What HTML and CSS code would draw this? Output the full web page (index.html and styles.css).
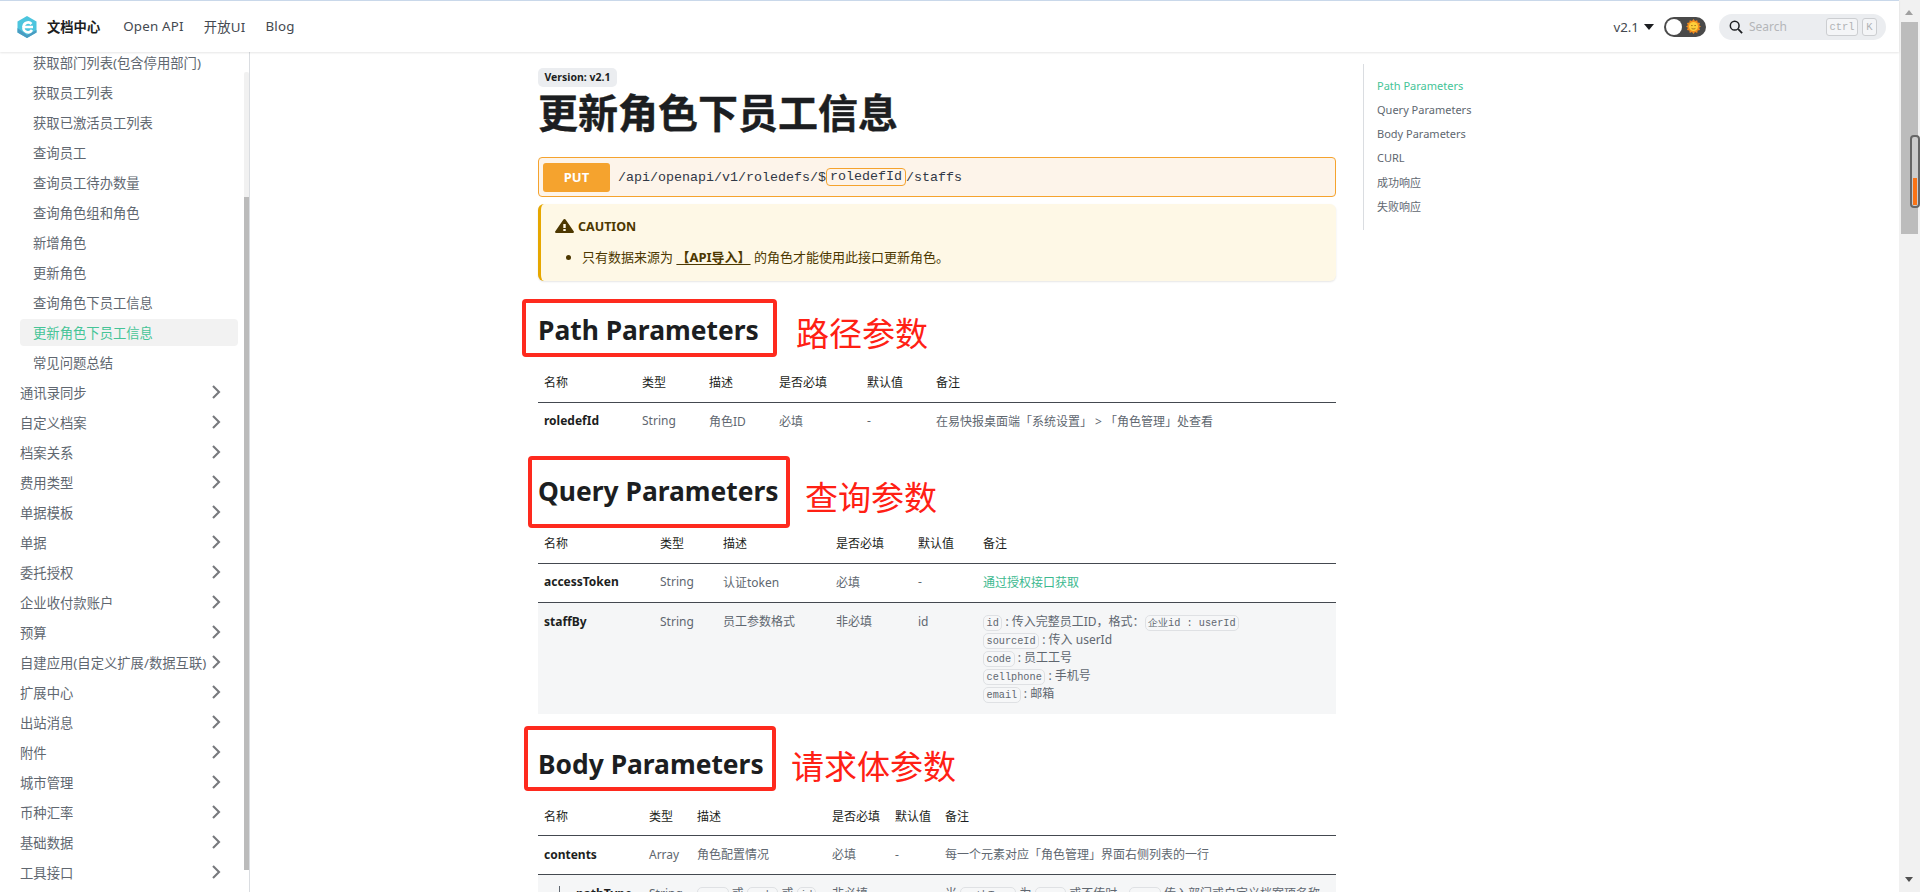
FILE: index.html
```html
<!DOCTYPE html>
<html lang="zh">
<head>
<meta charset="utf-8">
<title>更新角色下员工信息</title>
<link rel="stylesheet" href="styles.css">
</head>
<body>
<div class="shell">
  <div class="page">
    <header class="navbar">
      <a class="brand">
        <svg class="logo" viewBox="0 0 20 22" width="20" height="22">
          <polygon points="10,0 19.5,5.5 19.5,16.5 10,22 0.5,16.5 0.5,5.5" fill="#4cc5de"/>
          <polygon points="0.5,12 0.5,16.5 10,22 19.5,16.5 19.5,14 10,19" fill="#4a9cc2"/>
          <path d="M16 11H6.5M6.5 11a4.6 4.6 0 0 1 8-3M6.5 11a4.6 4.6 0 0 0 8.5 3" fill="none" stroke="#fff" stroke-width="2.6"/>
        </svg>
        <b class="brand-name">文档中心</b>
      </a>
      <nav class="nav-links">
        <a>Open API</a>
        <a>开放UI</a>
        <a>Blog</a>
      </nav>
      <div class="nav-right">
        <span class="version">v2.1<i class="caret"></i></span>
        <span class="toggle">
          <i class="knob"></i>
          <svg class="sun" viewBox="0 0 16 16" width="15" height="15">
            <path d="M8 0l1.6 2.2L12 1.2l.4 2.6 2.6.4-1 2.4L16 8l-2 1.4 1 2.4-2.6.4-.4 2.6-2.4-1L8 16l-1.600-2.200-2.400 1-.4-2.600-2.600-.4 1-2.400L0 8l2-1.400-1-2.400 2.600-.4.4-2.600 2.400 1z" fill="#f28c1e"/>
            <circle cx="8" cy="8" r="4.800" fill="#fdd03b"/>
            <path d="M5.500 7h1.500M9 7h1.500M6 10c1 .8 3 .8 4 0" stroke="#8a5a10" stroke-width=".9" fill="none"/>
          </svg>
        </span>
        <div class="search">
          <svg viewBox="0 0 16 16" width="14" height="14"><circle cx="6.500" cy="6.500" r="5" fill="none" stroke="#1c1e21" stroke-width="1.700"/><path d="M10.500 10.500L15 15" stroke="#1c1e21" stroke-width="2"/></svg>
          <span class="search-text">Search</span>
          <kbd class="key key-ctrl">ctrl</kbd>
          <kbd class="key key-k">K</kbd>
        </div>
      </div>
    </header>

    <div class="layout">
      <aside class="sidebar">
        <ul class="menu">
          <li class="sub">获取部门列表(包含停用部门)</li>
          <li class="sub">获取员工列表</li>
          <li class="sub">获取已激活员工列表</li>
          <li class="sub">查询员工</li>
          <li class="sub">查询员工待办数量</li>
          <li class="sub">查询角色组和角色</li>
          <li class="sub">新增角色</li>
          <li class="sub">更新角色</li>
          <li class="sub">查询角色下员工信息</li>
          <li class="sub active">更新角色下员工信息</li>
          <li class="sub">常见问题总结</li>
          <li class="cat">通讯录同步<svg class="chev" viewBox="0 0 10 14"><path d="M2 1l6 6-6 6"/></svg></li>
          <li class="cat">自定义档案<svg class="chev" viewBox="0 0 10 14"><path d="M2 1l6 6-6 6"/></svg></li>
          <li class="cat">档案关系<svg class="chev" viewBox="0 0 10 14"><path d="M2 1l6 6-6 6"/></svg></li>
          <li class="cat">费用类型<svg class="chev" viewBox="0 0 10 14"><path d="M2 1l6 6-6 6"/></svg></li>
          <li class="cat">单据模板<svg class="chev" viewBox="0 0 10 14"><path d="M2 1l6 6-6 6"/></svg></li>
          <li class="cat">单据<svg class="chev" viewBox="0 0 10 14"><path d="M2 1l6 6-6 6"/></svg></li>
          <li class="cat">委托授权<svg class="chev" viewBox="0 0 10 14"><path d="M2 1l6 6-6 6"/></svg></li>
          <li class="cat">企业收付款账户<svg class="chev" viewBox="0 0 10 14"><path d="M2 1l6 6-6 6"/></svg></li>
          <li class="cat">预算<svg class="chev" viewBox="0 0 10 14"><path d="M2 1l6 6-6 6"/></svg></li>
          <li class="cat">自建应用(自定义扩展/数据互联)<svg class="chev" viewBox="0 0 10 14"><path d="M2 1l6 6-6 6"/></svg></li>
          <li class="cat">扩展中心<svg class="chev" viewBox="0 0 10 14"><path d="M2 1l6 6-6 6"/></svg></li>
          <li class="cat">出站消息<svg class="chev" viewBox="0 0 10 14"><path d="M2 1l6 6-6 6"/></svg></li>
          <li class="cat">附件<svg class="chev" viewBox="0 0 10 14"><path d="M2 1l6 6-6 6"/></svg></li>
          <li class="cat">城市管理<svg class="chev" viewBox="0 0 10 14"><path d="M2 1l6 6-6 6"/></svg></li>
          <li class="cat">币种汇率<svg class="chev" viewBox="0 0 10 14"><path d="M2 1l6 6-6 6"/></svg></li>
          <li class="cat">基础数据<svg class="chev" viewBox="0 0 10 14"><path d="M2 1l6 6-6 6"/></svg></li>
          <li class="cat">工具接口<svg class="chev" viewBox="0 0 10 14"><path d="M2 1l6 6-6 6"/></svg></li>
        </ul>
        <div class="side-track"><div class="side-thumb"></div></div>
      </aside>

      <main class="content">
        <article class="doc">
          <span class="badge">Version: v2.1</span>
          <h1>更新角色下员工信息</h1>

          <div class="api">
            <span class="method">PUT</span>
            <span class="api-path">/api/openapi/v1/roledefs/$<span class="api-var">roledefId</span>/staffs</span>
          </div>

          <div class="caution">
            <div class="caution-head">
              <svg viewBox="0 0 16 16" width="19" height="16" preserveAspectRatio="none"><path fill="#4d3800" d="M8.893 1.500c-.183-.31-.52-.5-.887-.5s-.703.19-.886.5L.138 13.499a.98.98 0 0 0 0 1.001c.193.31.53.501.886.501h13.964c.367 0 .704-.19.877-.5a1.030 1.030 0 0 0 .01-1.002L8.893 1.500zm.133 11.497H6.987v-2.003h2.039v2.003zm0-3.004H6.987V5.987h2.039v4.006z"/></svg>
              <span>CAUTION</span>
            </div>
            <ul class="caution-list">
              <li>只有数据来源为 <b class="u">【API导入】</b> 的角色才能使用此接口更新角色。</li>
            </ul>
          </div>

          <h2 class="h-path">Path Parameters<span class="redbox"></span><span class="redtext">路径参数</span></h2>
          <table class="t-path">
            <colgroup><col class="c1"><col class="c2"><col class="c3"><col class="c4"><col class="c5"><col></colgroup>
            <thead><tr><th>名称</th><th>类型</th><th>描述</th><th>是否必填</th><th>默认值</th><th>备注</th></tr></thead>
            <tbody>
              <tr class="plain"><td><b>roledefId</b></td><td>String</td><td>角色ID</td><td>必填</td><td>-</td><td>在易快报桌面端「系统设置」 &gt; 「角色管理」处查看</td></tr>
            </tbody>
          </table>

          <h2 class="h-query">Query Parameters<span class="redbox"></span><span class="redtext">查询参数</span></h2>
          <table class="t-query">
            <colgroup><col class="c1"><col class="c2"><col class="c3"><col class="c4"><col class="c5"><col></colgroup>
            <thead><tr><th>名称</th><th>类型</th><th>描述</th><th>是否必填</th><th>默认值</th><th>备注</th></tr></thead>
            <tbody>
              <tr><td><b>accessToken</b></td><td>String</td><td>认证token</td><td>必填</td><td>-</td><td><a class="link">通过授权接口获取</a></td></tr>
              <tr class="alt tall"><td><b>staffBy</b></td><td>String</td><td>员工参数格式</td><td>非必填</td><td>id</td>
                <td><code>id</code> : 传入完整员工ID，格式：<code>企业id : userId</code><br><code>sourceId</code> : 传入 userId<br><code>code</code> : 员工工号<br><code>cellphone</code> : 手机号<br><code>email</code> : 邮箱</td></tr>
            </tbody>
          </table>

          <h2 class="h-body">Body Parameters<span class="redbox"></span><span class="redtext">请求体参数</span></h2>
          <table class="t-body">
            <colgroup><col class="c1"><col class="c2"><col class="c3"><col class="c4"><col class="c5"><col></colgroup>
            <thead><tr><th>名称</th><th>类型</th><th>描述</th><th>是否必填</th><th>默认值</th><th>备注</th></tr></thead>
            <tbody>
              <tr><td><b>contents</b></td><td>Array</td><td>角色配置情况</td><td>必填</td><td>-</td><td>每一个元素对应「角色管理」界面右侧列表的一行</td></tr>
              <tr class="alt tall"><td class="nested"><i class="tick"></i><b>pathType</b></td><td>String</td><td><code>name</code> 或 <code>code</code> 或 <code>id</code></td><td>非必填</td><td></td><td>当 <code>pathType</code> 为 <code>name</code> 或不传时，<code>name</code> 传入部门或自定义档案项名称</td></tr>
            </tbody>
          </table>
        </article>

        <nav class="toc">
          <a class="on">Path Parameters</a>
          <a>Query Parameters</a>
          <a>Body Parameters</a>
          <a>CURL</a>
          <a class="zh">成功响应</a>
          <a class="zh">失败响应</a>
        </nav>
      </main>
    </div>
  </div>

  <div class="scrollbar">
    <i class="arrow-up"></i>
    <div class="thumb"></div>
    <i class="arrow-down"></i>
    <div class="minimap"><div class="minimap-fill"></div></div>
  </div>
</div>
</body>
</html>
```

FILE: styles.css
```css
* { box-sizing: border-box; }
html, body { margin: 0; height: 892px; overflow: hidden; background: #fff; }
body { font-family: "Noto Sans", "Noto Sans CJK SC", sans-serif; color: #1c1e21; }
a { color: inherit; text-decoration: none; }
ul { list-style: none; margin: 0; padding: 0; }

.shell { display: flex; height: 892px; position: relative; }
.page { width: 1899px; display: flex; flex-direction: column; }

/* top navigation */
.navbar {
  height: 52px; flex: none; display: flex; align-items: center;
  padding: 0 13px 0 17px; border-top: 1px solid #c9d8ea;
  background: #fff; box-shadow: 0 1px 2px rgba(0, 0, 0, .1);
  position: relative; z-index: 2;
}
.brand { display: flex; align-items: center; }
.logo { display: block; }
.brand-name { margin-left: 10px; font-size: 13.3px; font-weight: 700; font-family: "Noto Sans CJK SC", sans-serif; }
.nav-links { display: flex; gap: 20px; margin-left: 23px; font-size: 13.33px; color: #444950; letter-spacing: .2px; }
.nav-right { margin-left: auto; display: flex; align-items: center; }
.version { display: flex; align-items: center; font-size: 13.33px; color: #444950; }
.caret { width: 0; height: 0; margin-left: 5px; border: 5.5px solid transparent; border-top: 6px solid #1c1e21; border-bottom: 0; }
.toggle {
  width: 42px; height: 20px; margin-left: 10px; border-radius: 10px; background: #4a4a4a;
  display: flex; align-items: center; justify-content: space-between; padding: 0 5px 0 2px;
}
.knob { width: 16px; height: 16px; border-radius: 50%; background: #fff; }
.sun { display: block; }
.search {
  width: 167px; height: 26px; margin-left: 13px; border-radius: 13px; background: #ebedf0;
  display: flex; align-items: center; padding: 0 9px 0 10px;
}
.search-text { margin-left: 6px; font-size: 12px; color: #b4b6b9; flex: 1; }
.key {
  height: 18px; display: flex; align-items: center; justify-content: center;
  font: 10.5px "Liberation Mono", monospace; color: #b0b2b5;
  background: #f4f5f7; border: 1px solid #ccced1; border-radius: 3px;
}
.key-ctrl { width: 32px; }
.key-k { width: 15px; margin-left: 4px; }

/* main layout */
.layout { flex: 1; display: flex; min-height: 0; }

.sidebar { width: 250px; flex: none; border-right: 1px solid #dadde1; position: relative; overflow: hidden; }
.menu { margin-top: -5px; font-size: 13.33px; color: #606770; }
.sub, .cat { height: 30px; display: flex; align-items: center; white-space: nowrap; }
.sub { padding-left: 33px; }
.cat { padding: 0 28px 0 20px; justify-content: space-between; }
.active { height: 27px; margin: 1.5px 11px 1.5px 20px; padding-left: 13px; background: #f2f2f2; border-radius: 4px; color: #45c497; }
.chev { width: 10px; height: 14px; flex: none; fill: none; stroke: #77797d; stroke-width: 2.1; }
.side-track { position: absolute; top: 20px; right: 0; width: 5px; height: 798px; background: #f1f1f1; border-radius: 2px; }
.side-thumb { position: absolute; top: 125px; left: 0; right: 0; bottom: 0; background: #bbb; }

.content { flex: 1; display: flex; align-items: flex-start; padding: 16px 0 0 288px; min-width: 0; overflow: hidden; }
.doc { width: 798px; flex: none; }

.badge {
  display: block; width: 79px; height: 19px; line-height: 19px; text-align: center;
  font-size: 10.5px; font-weight: 700; background: #ebedf0; border-radius: 5px;
}
h1 { margin: 0 0 22px; height: 48px; line-height: 48px; font-size: 40px; font-weight: 700; font-family: "Noto Sans CJK SC", sans-serif; white-space: nowrap; -webkit-text-stroke: .4px #1c1e21; }

.api {
  height: 40px; display: flex; align-items: center; padding-left: 4px;
  background: #fdf4ea; border: 1px solid #f5a32e; border-radius: 4px;
}
.method {
  width: 67px; height: 29px; display: flex; align-items: center; justify-content: center;
  background: #f5a32e; color: #fff; font-size: 13px; font-weight: 700; border-radius: 3px;
}
.api-path { margin-left: 8px; font: 13.33px "Liberation Mono", monospace; color: #303846; display: flex; align-items: center; }
.api-var { height: 18px; line-height: 16px; padding: 0 3px; margin: 0; border: 1px solid #f5a32e; border-radius: 4px; }

.caution {
  height: 77px; margin-top: 7px; padding: 14px 14px 0 14px; background: #fef8e6;
  border-left: 3px solid #e6a700; border-radius: 6px; color: #4d3800;
  box-shadow: 0 1px 2px rgba(0, 0, 0, .1);
}
.caution-head { height: 16px; display: flex; align-items: center; gap: 4px; font-size: 12.5px; font-weight: 700; }
.caution-list { margin-top: 13px; padding-left: 27px; font-size: 13px; line-height: 20px; list-style: disc; }
.caution-list li { list-style: disc; }
.u { text-decoration: underline; text-underline-offset: 2px; }

/* section headings with the red reviewer marks over them */
h2 { position: relative; height: 32px; line-height: 32px; font-size: 26.4px; font-weight: 700; margin: 0 0 17px; white-space: nowrap; }
.h-path { margin-top: 33px; }
.h-query { margin-top: 34px; margin-bottom: 17px; }
.h-body { margin-top: 34px; }
.redbox { position: absolute; border: 4px solid #fe2a1e; border-radius: 4px; }
.redtext { position: absolute; font-size: 33px; line-height: 32px; font-weight: 400; color: #ff2014; font-family: "Noto Sans CJK SC", sans-serif; }
.h-path .redbox { left: -16px; top: -15px; width: 255px; height: 58px; }
.h-path .redtext { left: 258px; top: 2px; }
.h-query .redbox { left: -10px; top: -19px; width: 262px; height: 72px; }
.h-query .redtext { left: 267px; top: 5px; }
.h-body .redbox { left: -14px; top: -22px; width: 252px; height: 65px; }
.h-body .redtext { left: 253px; top: 1px; }

/* tables */
table { width: 798px; table-layout: fixed; border-collapse: collapse; font-size: 12px; }
th { height: 39px; padding: 0 6px; text-align: left; font-weight: 400; border-bottom: 1px solid #444950; white-space: nowrap; }
td { height: 39px; padding: 0 6px 2px; color: #606770; border-bottom: 1px solid #444950; white-space: nowrap; }
td b { color: #1c1e21; }
.plain td { border-bottom: 0; }
.alt td { background: #f5f6f7; border-bottom: 0; }
.tall td { padding-top: 10px; padding-bottom: 10px; line-height: 18.2px; vertical-align: top; }
.tall td.nested { padding-left: 38px; }
.link { color: #3cb98f; }
code {
  font: 10.24px "Liberation Mono", monospace; padding: 1px 2.5px;
  background: #f6f7f8; border: 1px solid #dfe1e4; border-radius: 5px;
}
.nested { position: relative; }
.tick { position: absolute; left: 21px; top: 11px; width: 1px; height: 14px; background: #606770; }

.t-path .c1 { width: 98px; } .t-path .c2 { width: 67px; } .t-path .c3 { width: 70px; } .t-path .c4 { width: 88px; } .t-path .c5 { width: 69px; }
.t-query .c1 { width: 116px; } .t-query .c2 { width: 63px; } .t-query .c3 { width: 113px; } .t-query .c4 { width: 82px; } .t-query .c5 { width: 65px; }
.t-body .c1 { width: 105px; } .t-body .c2 { width: 48px; } .t-body .c3 { width: 135px; } .t-body .c4 { width: 63px; } .t-body .c5 { width: 50px; }

/* table of contents */
.toc {
  width: 240px; margin: -4px 0 0 27px; height: 166px; flex: none; padding: 10px 0 12px 13px;
  border-left: 1px solid #dadde1; font-size: 11px; color: #606770;
  display: flex; flex-direction: column;
}
.toc a { height: 24px; line-height: 24px; white-space: nowrap; }
.toc .on { color: #45c497; }
.toc .zh { padding-top: 1px; }

/* browser scrollbar */
.scrollbar { width: 21px; flex: none; background: #f1f1f1; position: relative; }
.arrow-up, .arrow-down { position: absolute; left: 6px; width: 0; height: 0; border: 4.5px solid transparent; }
.arrow-up { top: 10px; border-top: 0; border-bottom: 5px solid #a0a0a0; }
.arrow-down { bottom: 10px; border-bottom: 0; border-top: 5px solid #505050; }
.thumb { position: absolute; top: 22px; left: 2px; width: 17px; height: 212px; background: #bcbcbc; }
.minimap { position: absolute; top: 135px; left: 11px; width: 10px; height: 73px; border: 2px solid #666; border-radius: 4px; background: #ccc; }
.minimap-fill { position: absolute; left: 1px; bottom: 1px; width: 4px; height: 27px; background: #f97316; }
```
